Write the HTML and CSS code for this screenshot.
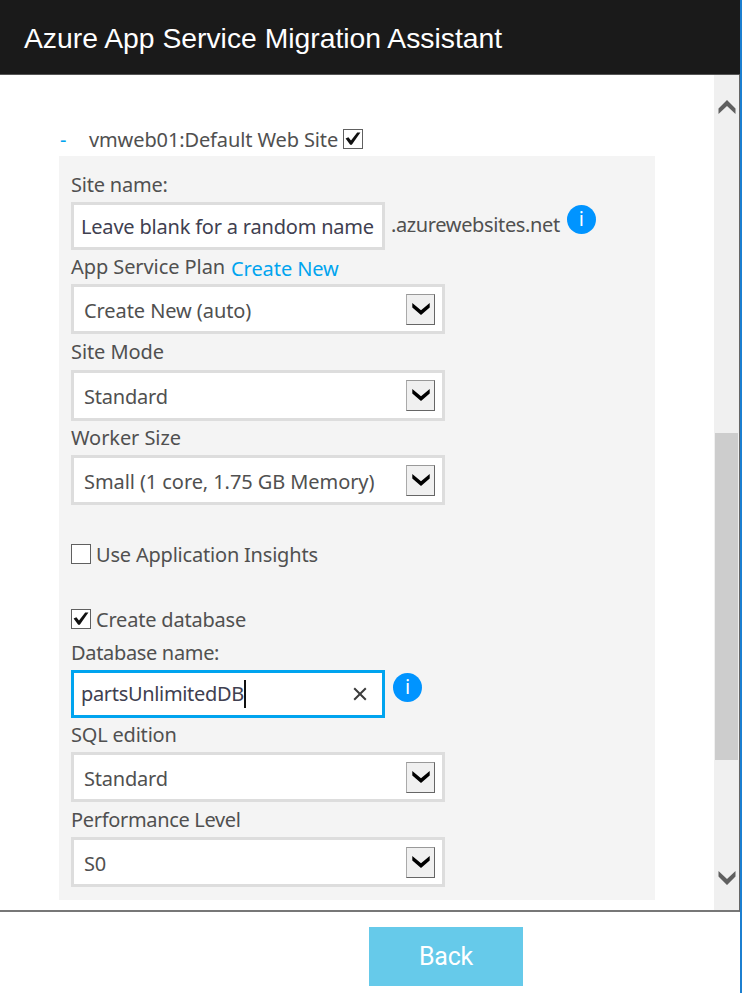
FILE: index.html
```html
<!DOCTYPE html>
<html lang="en">
<head>
<meta charset="utf-8">
<title>Azure App Service Migration Assistant</title>
<link rel="stylesheet" href="styles.css">
</head>
<body>
<svg class="defs" aria-hidden="true">
  <symbol id="tick" viewBox="0 0 20 20"><path d="M2.6 9.6 5.4 8.2 8 11.6 14.2 3.4H17.4L8.8 15.8H7.2Z" fill="#111"/></symbol>
  <symbol id="chevron" viewBox="0 0 18 12"><path d="M.3 0 9 7.2 17.7 0V4.6L9 12 .3 4.6Z"/></symbol>
  <symbol id="scroll-chevron" viewBox="0 0 18 14"><path d="M.5 0 9 8 17.5 0V5.6L9 14 .5 5.6Z"/></symbol>
</svg>
<div class="window">
  <header class="titlebar"><h1>Azure App Service Migration Assistant</h1></header>
  <div class="viewport">
    <main class="content">
      <div class="site-row">
        <span class="toggle">-</span>
        <span class="site-title">vmweb01:Default Web Site</span>
        <span class="check"><svg><use href="#tick"/></svg></span>
      </div>
      <section class="panel">
        <div class="label"><span>Site name:</span></div>
        <div class="row">
          <div class="input"><span>Leave blank for a random name</span></div>
          <span class="suffix">.azurewebsites.net</span>
          <span class="info">i</span>
        </div>
        <div class="label wide"><span>App Service Plan</span><a class="link">Create New</a></div>
        <div class="select wide"><span>Create New (auto)</span><i class="drop"><svg><use href="#chevron"/></svg></i></div>
        <div class="label tall wide"><span>Site Mode</span></div>
        <div class="select high"><span>Standard</span><i class="drop"><svg><use href="#chevron"/></svg></i></div>
        <div class="label wide"><span>Worker Size</span></div>
        <div class="select wide"><span>Small (1 core, 1.75 GB Memory)</span><i class="drop"><svg><use href="#chevron"/></svg></i></div>
        <div class="check-row insights"><span class="check"></span><span>Use Application Insights</span></div>
        <div class="check-row"><span class="check"><svg><use href="#tick"/></svg></span><span>Create database</span></div>
        <div class="label db narrow"><span>Database name:</span></div>
        <div class="row">
          <div class="input focused"><span>partsUnlimitedDB</span><i class="caret"></i>
            <svg class="clear" viewBox="0 0 14 14"><path d="M1.2 1.2 12.8 12.8M12.8 1.2 1.2 12.8"/></svg></div>
          <span class="info near">i</span>
        </div>
        <div class="label"><span>SQL edition</span></div>
        <div class="select"><span>Standard</span><i class="drop"><svg><use href="#chevron"/></svg></i></div>
        <div class="label perf narrow"><span>Performance Level</span></div>
        <div class="select"><span>S0</span><i class="drop"><svg><use href="#chevron"/></svg></i></div>
      </section>
    </main>
    <div class="scrollbar">
      <svg class="arrow up"><use href="#scroll-chevron"/></svg>
      <div class="thumb"></div>
      <svg class="arrow down"><use href="#scroll-chevron"/></svg>
    </div>
  </div>
  <footer class="footer"><button class="back">Back</button></footer>
</div>
</body>
</html>
```
FILE: styles.css
```css
* { box-sizing: border-box; }
body { margin: 0; width: 742px; height: 993px; overflow: hidden; background: #1c7fd0; font: 20px/26px "Noto Sans", sans-serif; letter-spacing: -.2px; color: #505050; }
.defs { position: absolute; width: 0; height: 0; }
.window { width: 740px; height: 993px; display: flex; flex-direction: column; background: #fff; }
.titlebar { height: 75px; background: #1a1a1a; border-bottom: 1px solid #555; padding: 21px 24px 0; color: #fff; }
h1 { margin: 0; font: 28.3px/34px "Liberation Sans", Arial, sans-serif; letter-spacing: 0; white-space: nowrap; }
.viewport { height: 837px; display: flex; border-right: 1px solid #666; border-bottom: 2px solid #777; }
.content { flex: 1; padding: 52px 0 0 59px; }
.site-row { height: 29px; display: flex; align-items: flex-start; white-space: nowrap; }
.toggle { width: 29px; margin-left: 1px; color: #00a4ef; }
.site-title { letter-spacing: -.12px; }
.check { width: 20px; height: 20px; border: 1px solid #606060; background: #fff; flex: none; }
.check svg { display: block; width: 20px; height: 20px; margin: -1px; }
.site-row .check { margin: 2px 0 0 5px; }
.panel { width: 596px; height: 744px; background: #f4f4f4; padding: 12px 0 0 12px; white-space: nowrap; }
.label { height: 34px; display: flex; align-items: center; }
.label.tall { height: 36px; }
.label.perf { height: 35px; }
.wide { letter-spacing: -.08px; }
.narrow { letter-spacing: -.33px; }
.link { color: #00a4ef; margin: 3px 0 0 6px; }
.row { display: flex; }
.input { width: 314px; height: 48px; border: 3px solid #ddd; background: #fff; padding: 2px 7px 0; display: flex; align-items: center; color: #404050; }
.input.focused { padding-top: 0; border-color: #00a4ef; letter-spacing: -.33px; }
.caret { width: 2px; height: 28px; background: #111; }
.clear { width: 14px; height: 14px; margin: 0 8px 0 auto; fill: none; stroke: #3c3c3c; stroke-width: 2; }
.suffix { margin: 10px 0 0 6px; letter-spacing: -.37px; }
.info { width: 29px; height: 29px; margin: 3px 0 0 7px; border-radius: 50%; background: #0094ff; color: #fff; font-size: 20px; line-height: 27px; text-align: center; }
.info.near { margin-left: 8px; }
.select { width: 374px; height: 50px; border: 3px solid #ddd; background: #fff; display: flex; align-items: center; justify-content: space-between; padding: 0 7px 0 10px; }
.select.high { height: 51px; }
.select > span { margin-top: 3px; }
.drop { width: 29px; height: 31px; border: 1px solid; border-color: #999 #666 #666 #aaa; background: #f0f0f0; display: flex; justify-content: center; padding-top: 8px; }
.drop svg { width: 18px; height: 12px; fill: #000; }
.check-row { height: 65px; display: flex; align-items: center; gap: 5px; }
.check-row .check { margin-top: -1px; }
.check-row.insights { margin-top: 17px; }
.label.db { margin-top: -16px; }
.scrollbar { width: 25px; background: #f0f0f0; display: flex; flex-direction: column; align-items: center; }
.arrow { width: 18px; height: 14px; fill: #606060; }
.up { margin-top: 25px; transform: scaleY(-1); }
.thumb { width: 23px; height: 327px; margin-top: 319px; background: #cdcdcd; }
.down { margin-top: 111px; }
.footer { padding: 15px 0 0 369px; }
.back { display: block; width: 154px; height: 59px; border: 0; padding: 0; background: #66caea; color: #fff; font: 25px/59px Roboto, sans-serif; letter-spacing: -.2px; }
```
